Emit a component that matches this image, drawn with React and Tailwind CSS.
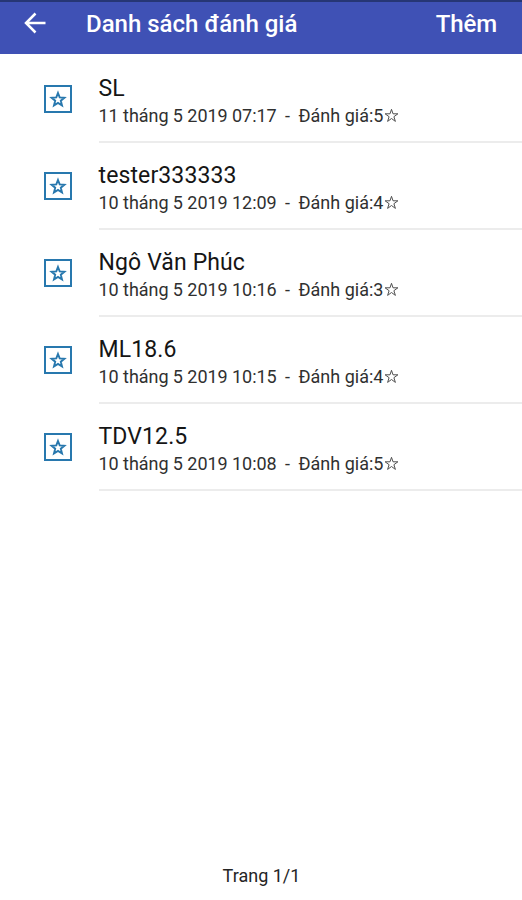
const reviews = [
  { name: 'SL', date: '11 tháng 5 2019 07:17', rating: 5 },
  { name: 'tester333333', date: '10 tháng 5 2019 12:09', rating: 4 },
  { name: 'Ngô Văn Phúc', date: '10 tháng 5 2019 10:16', rating: 3 },
  { name: 'ML18.6', date: '10 tháng 5 2019 10:15', rating: 4 },
  { name: 'TDV12.5', date: '10 tháng 5 2019 10:08', rating: 5 },
];

function BackArrow() {
  return (
    <svg className="h-[22px] w-[22px]" viewBox="0 0 22 22" fill="none" stroke="#fff" strokeWidth="2.5">
      <path d="M21.500 11H2.500M11.500 1.500 2 11l9.500 9.500" />
    </svg>
  );
}

function BoxedStar() {
  return (
    <svg className="h-7 w-7 shrink-0" viewBox="0 0 28 28" fill="none" stroke="#2878ae">
      <rect x="1" y="1" width="26" height="26" strokeWidth="2" />
      <path
        strokeWidth="1.9"
        d="M14 8l1.700 4.400 4.700.300-3.600 3 1.200 4.800L14 17.900l-4 2.600 1.200-4.800-3.600-3 4.700-.300z"
      />
    </svg>
  );
}

function SmallStar() {
  return (
    <svg className="h-[15px] w-[15px]" viewBox="0 0 15 15" fill="none" stroke="#505050" strokeWidth="1">
      <path d="M7.500 1.300l1.500 4.500h4.900l-4 2.900 1.500 4.700-3.900-2.900-3.900 2.900 1.500-4.700-4-2.900H6z" />
    </svg>
  );
}

function ReviewRow({ name, date, rating }) {
  return (
    <li className="flex h-[87.100px] pl-11">
      <div className="w-[54.500px] shrink-0 pt-[29px]">
        <BoxedStar />
      </div>
      <div className="flex-1 border-b-2 border-[#ececec] pt-[18px]">
        <div className="h-[29px] text-[23px] leading-[29px] tracking-[0.12px] text-[#151515]">{name}</div>
        <div className="flex h-[25px] items-center whitespace-nowrap text-[18px] leading-[25px] text-[#303030]">
          <span className="w-[186.500px] tracking-[-0.05px]">{date}</span>
          <span className="w-[13.500px]">-</span>
          <span className="w-[85.500px]">Đánh giá:{rating}</span>
          <SmallStar />
        </div>
      </div>
    </li>
  );
}

export default function App() {
  return (
    <div className="flex h-[900px] w-[522px] flex-col overflow-hidden bg-white font-['Roboto','Noto_Sans',sans-serif]">
      <header className="flex h-[54px] items-start border-t-2 border-[#263675] bg-[#3f51b5] pr-[25px] pl-6 font-medium text-white">
        <div className="w-[62px] pt-[10px]">
          <BackArrow />
        </div>
        <h1 className="flex-1 pt-[6px] text-[24px] leading-[32px]">Danh sách đánh giá</h1>
        <button className="pt-[6px] text-[24px] leading-[32px] tracking-[-0.1px]">Thêm</button>
      </header>
      <ul className="pt-[1.500px]">
        {reviews.map((review) => (
          <ReviewRow key={review.name} {...review} />
        ))}
      </ul>
      <footer className="mt-auto pb-3 pl-px text-center text-[18px] leading-6 text-[#252525]">Trang 1/1</footer>
    </div>
  );
}
